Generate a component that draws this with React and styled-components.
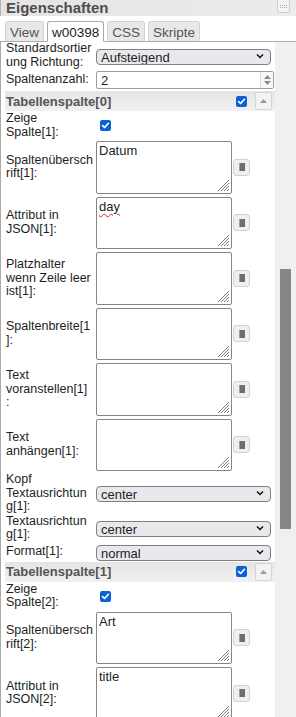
import React from "react";
import styled, { createGlobalStyle } from "styled-components";

const GlobalStyle = createGlobalStyle`
  html, body {
    margin: 0;
    padding: 0;
    background: #fff;
    overflow: hidden;
  }
  body {
    font-family: "Liberation Sans", Arial, sans-serif;
  }
`;

const tabs = [
  { name: "View" },
  { name: "w00398", active: true },
  { name: "CSS" },
  { name: "Skripte" },
];

// the second column is cut by the window after its JSON attribute
const columns = [
  { n: 1, title: "Datum", attr: "day", typo: true, full: true },
  { n: 2, title: "Art", attr: "title", full: false },
];

const Check = () => (
  <CheckBox>
    <svg width="9" height="9" viewBox="0 0 9 9">
      <path d="M1.6 4.6 L3.6 6.5 L7.4 2.3" fill="none" stroke="#fff" strokeWidth="1.7" strokeLinecap="round" strokeLinejoin="round" />
    </svg>
  </CheckBox>
);

const Grip = () => (
  <GripIcon width="13" height="13" viewBox="0 0 13 13">
    <path d="M12 1 L1 12 M12 4 L4 12 M12 7 L7 12 M12 10 L10 12" stroke="#7a7a7a" strokeWidth="1" />
  </GripIcon>
);

const TextField = ({ value, typo }) => (
  <TextRow>
    <AreaWrap>
      <Area defaultValue={value} $typo={typo} spellCheck={false} />
      <Grip />
    </AreaWrap>
    <SideButton>
      <SideBlock />
    </SideButton>
  </TextRow>
);

const Dropdown = ({ value }) => (
  <SelectWrap>
    <Select defaultValue={value}>
      <option>{value}</option>
    </Select>
    <Chevron width="8" height="6" viewBox="0 0 8 6">
      <path d="M1 1.5 L4 4.5 L7 1.5" fill="none" stroke="#111" strokeWidth="1.5" />
    </Chevron>
  </SelectWrap>
);

const Field = ({ label, children }) => (
  <FieldRow>
    <Label>{label}</Label>
    <Control>{children}</Control>
  </FieldRow>
);

const ColumnSection = ({ n, title, attr, typo, full }) => (
  <>
    <SectionHeader>
      <SectionTitle>Tabellenspalte[{n - 1}]</SectionTitle>
      <Check />
      <CollapseButton>
        <svg width="7" height="4" viewBox="0 0 7 4">
          <path d="M0 4 L3.5 0 L7 4 Z" fill="#9a9a9a" />
        </svg>
      </CollapseButton>
    </SectionHeader>
    <Field label={`Zeige\nSpalte[${n}]:`}>
      <CheckSpacer>
        <Check />
      </CheckSpacer>
    </Field>
    <Field label={`Spaltenübersch\nrift[${n}]:`}>
      <TextField value={title} />
    </Field>
    <Field label={`Attribut in\nJSON[${n}]:`}>
      <TextField value={attr} typo={typo} />
    </Field>
    {full && (
      <>
        <Field label={`Platzhalter\nwenn Zeile leer\nist[${n}]:`}>
          <TextField value="" />
        </Field>
        <Field label={`Spaltenbreite[${n}\n]:`}>
          <TextField value="" />
        </Field>
        <Field label={`Text\nvoranstellen[${n}]\n:`}>
          <TextField value="" />
        </Field>
        <Field label={`Text\nanhängen[${n}]:`}>
          <TextField value="" />
        </Field>
        <Field label={`Kopf\nTextausrichtun\ng[${n}]:`}>
          <Dropdown value="center" />
        </Field>
        <Field label={`Textausrichtun\ng[${n}]:`}>
          <Dropdown value="center" />
        </Field>
        <Field label={`Format[${n}]:`}>
          <Dropdown value="normal" />
        </Field>
      </>
    )}
  </>
);

export default function App() {
  return (
    <Panel>
      <GlobalStyle />
      <TitleBar>
        <Title>Eigenschaften</Title>
        <TitleButton>
          <Dashes />
        </TitleButton>
      </TitleBar>
      <TabBar>
        {tabs.map((t) => (
          <Tab key={t.name} $active={t.active}>
            {t.name}
          </Tab>
        ))}
      </TabBar>
      <Body>
        <Content>
          <Field label={"Standardsortier\nung Richtung:"}>
            <Dropdown value="Aufsteigend" />
          </Field>
          <Field label="Spaltenanzahl:">
            <NumberBox>
              <NumberInput defaultValue="2" />
              <Spinner>
                <svg width="7" height="4" viewBox="0 0 7 4">
                  <path d="M0 4 L3.5 0 L7 4 Z" fill="#8a8a8a" />
                </svg>
                <svg width="7" height="4" viewBox="0 0 7 4">
                  <path d="M0 0 L3.5 4 L7 0 Z" fill="#8a8a8a" />
                </svg>
              </Spinner>
            </NumberBox>
          </Field>
          {columns.map((c) => (
            <ColumnSection key={c.n} {...c} />
          ))}
        </Content>
        <ScrollTrack>
          <ScrollThumb />
        </ScrollTrack>
      </Body>
    </Panel>
  );
}

const Panel = styled.div`
  width: 296px;
  height: 717px;
  display: flex;
  flex-direction: column;
  overflow: hidden;
  font-family: "Liberation Sans", Arial, sans-serif;
  color: #1e1e1e;
`;

const TitleBar = styled.div`
  height: 16px;
  flex: none;
  display: flex;
  align-items: flex-start;
  justify-content: space-between;
  background: linear-gradient(to right, #e4e4e4, #ececec);
  border-left: 1px solid #b5b5b5;
  padding-left: 5px;
`;

const Title = styled.div`
  font-size: 15px;
  line-height: 16px;
  font-weight: bold;
  color: #4e4e4e;
`;

const TitleButton = styled.div`
  width: 13px;
  height: 14px;
  margin-top: -1px;
  margin-right: 6px;
  box-sizing: border-box;
  border: 1px solid #cfcfcf;
  border-radius: 2px;
  background: #f3f3f3;
  display: flex;
  align-items: center;
  justify-content: center;
`;

const Dashes = styled.span`
  width: 7px;
  border-top: 1px dotted #a8a8a8;
  border-bottom: 1px dotted #a8a8a8;
  height: 1px;
`;

const TabBar = styled.div`
  flex: none;
  display: flex;
  gap: 3px;
  padding: 5px 0 0 5px;
  border-bottom: 1px solid #ababab;
  background: #fff;
`;

const Tab = styled.div`
  height: 21px;
  box-sizing: border-box;
  margin-bottom: -1px;
  padding: 0 4px;
  font-size: 13.5px;
  line-height: 21px;
  border: 1px solid ${({ $active }) => ($active ? "#ababab" : "#d3d3d3")};
  border-bottom-color: ${({ $active }) => ($active ? "#fff" : "#ababab")};
  border-radius: 3px 3px 0 0;
  background: ${({ $active }) => ($active ? "#fff" : "#e8e8e8")};
  color: ${({ $active }) => ($active ? "#1e1e1e" : "#555")};
`;

const Body = styled.div`
  flex: 1;
  display: flex;
  min-height: 0;
`;

const Content = styled.div`
  flex: 1;
  display: flex;
  flex-direction: column;
  gap: 1px;
  padding-left: 4px;
  border-left: 1px solid #a9a9a9;
  overflow: hidden;
`;

const ScrollTrack = styled.div`
  width: 21px;
  flex: none;
  background: #f0f0f0;
  display: flex;
  justify-content: center;
`;

const ScrollThumb = styled.div`
  width: 11px;
  height: 260px;
  margin-top: 227px;
  background: #868686;
`;

const FieldRow = styled.div`
  display: grid;
  grid-template-columns: 90px 1fr;
  align-items: center;
  padding-left: 1px;
  flex: none;
`;

const Label = styled.div`
  font-size: 12.5px;
  line-height: 13.5px;
  white-space: pre;
  color: #1e1e1e;
`;

const Control = styled.div`
  display: flex;
  align-items: center;
`;

const SelectWrap = styled.div`
  position: relative;
  width: 175px;
  height: 16px;
  margin: 1px 0;
`;

const Select = styled.select`
  appearance: none;
  width: 100%;
  height: 100%;
  box-sizing: border-box;
  margin: 0;
  padding: 0 0 0 4px;
  border: 1px solid #808080;
  border-radius: 4px;
  background: #e9e9ed;
  font-family: "Liberation Sans", Arial, sans-serif;
  font-size: 13px;
  color: #1e1e1e;
  outline: none;
`;

const Chevron = styled.svg`
  position: absolute;
  right: 7px;
  top: 5px;
  pointer-events: none;
`;

const NumberBox = styled.div`
  width: 178px;
  height: 18px;
  margin: 1px 0;
  box-sizing: border-box;
  border: 1px solid #9d9d9d;
  border-radius: 2px;
  display: flex;
  background: #fff;
`;

const NumberInput = styled.input`
  flex: 1;
  min-width: 0;
  border: none;
  outline: none;
  padding: 0 0 0 4px;
  font-family: "Liberation Sans", Arial, sans-serif;
  font-size: 13px;
  color: #1e1e1e;
  background: transparent;
`;

const Spinner = styled.div`
  width: 12px;
  border-left: 1px solid #dcdcdc;
  display: flex;
  flex-direction: column;
  align-items: center;
  justify-content: space-evenly;
  background: #f7f7f7;
`;

const SectionHeader = styled.div`
  height: 20px;
  flex: none;
  display: flex;
  align-items: center;
  padding-left: 1px;
  background: linear-gradient(to bottom, #e5e5e5, #f1f1f1);
`;

const SectionTitle = styled.div`
  flex: 1;
  font-size: 13px;
  font-weight: bold;
  color: #555;
`;

const CheckBox = styled.span`
  width: 11px;
  height: 11px;
  border-radius: 2px;
  background: #0b62d6;
  display: flex;
  align-items: center;
  justify-content: center;
`;

const CheckSpacer = styled.div`
  margin-left: 4px;
`;

const CollapseButton = styled.div`
  width: 17px;
  height: 18px;
  box-sizing: border-box;
  margin: 0 3px 0 8px;
  border: 1px solid #d5d5d5;
  border-radius: 2px;
  background: #f3f3f3;
  display: flex;
  align-items: center;
  justify-content: center;
`;

const TextRow = styled.div`
  display: flex;
  align-items: center;
  gap: 1px;
`;

const AreaWrap = styled.div`
  position: relative;
  width: 136px;
  height: 52.5px;
  margin: 1px 0;
`;

const Area = styled.textarea`
  width: 100%;
  height: 100%;
  box-sizing: border-box;
  margin: 0;
  padding: 1px 2px;
  border: 1px solid #858585;
  border-radius: 2px;
  resize: none;
  outline: none;
  font-family: "Liberation Sans", Arial, sans-serif;
  font-size: 13px;
  line-height: 15px;
  color: #1e1e1e;
  background: #fff;
  text-decoration: ${({ $typo }) => ($typo ? "underline wavy #e0201a" : "none")};
  text-decoration-thickness: 1px;
  text-underline-offset: 2px;
`;

const GripIcon = styled.svg`
  position: absolute;
  right: 2px;
  bottom: 2px;
  pointer-events: none;
`;

const SideButton = styled.div`
  width: 17px;
  height: 17px;
  box-sizing: border-box;
  border: 1px solid #d2d2d2;
  border-radius: 3px;
  background: #efefef;
  display: flex;
  align-items: center;
  justify-content: center;
`;

const SideBlock = styled.span`
  width: 6px;
  height: 8px;
  background: #6e6e6e;
  border-left: 1px solid #a0a0a0;
  box-sizing: border-box;
`;
